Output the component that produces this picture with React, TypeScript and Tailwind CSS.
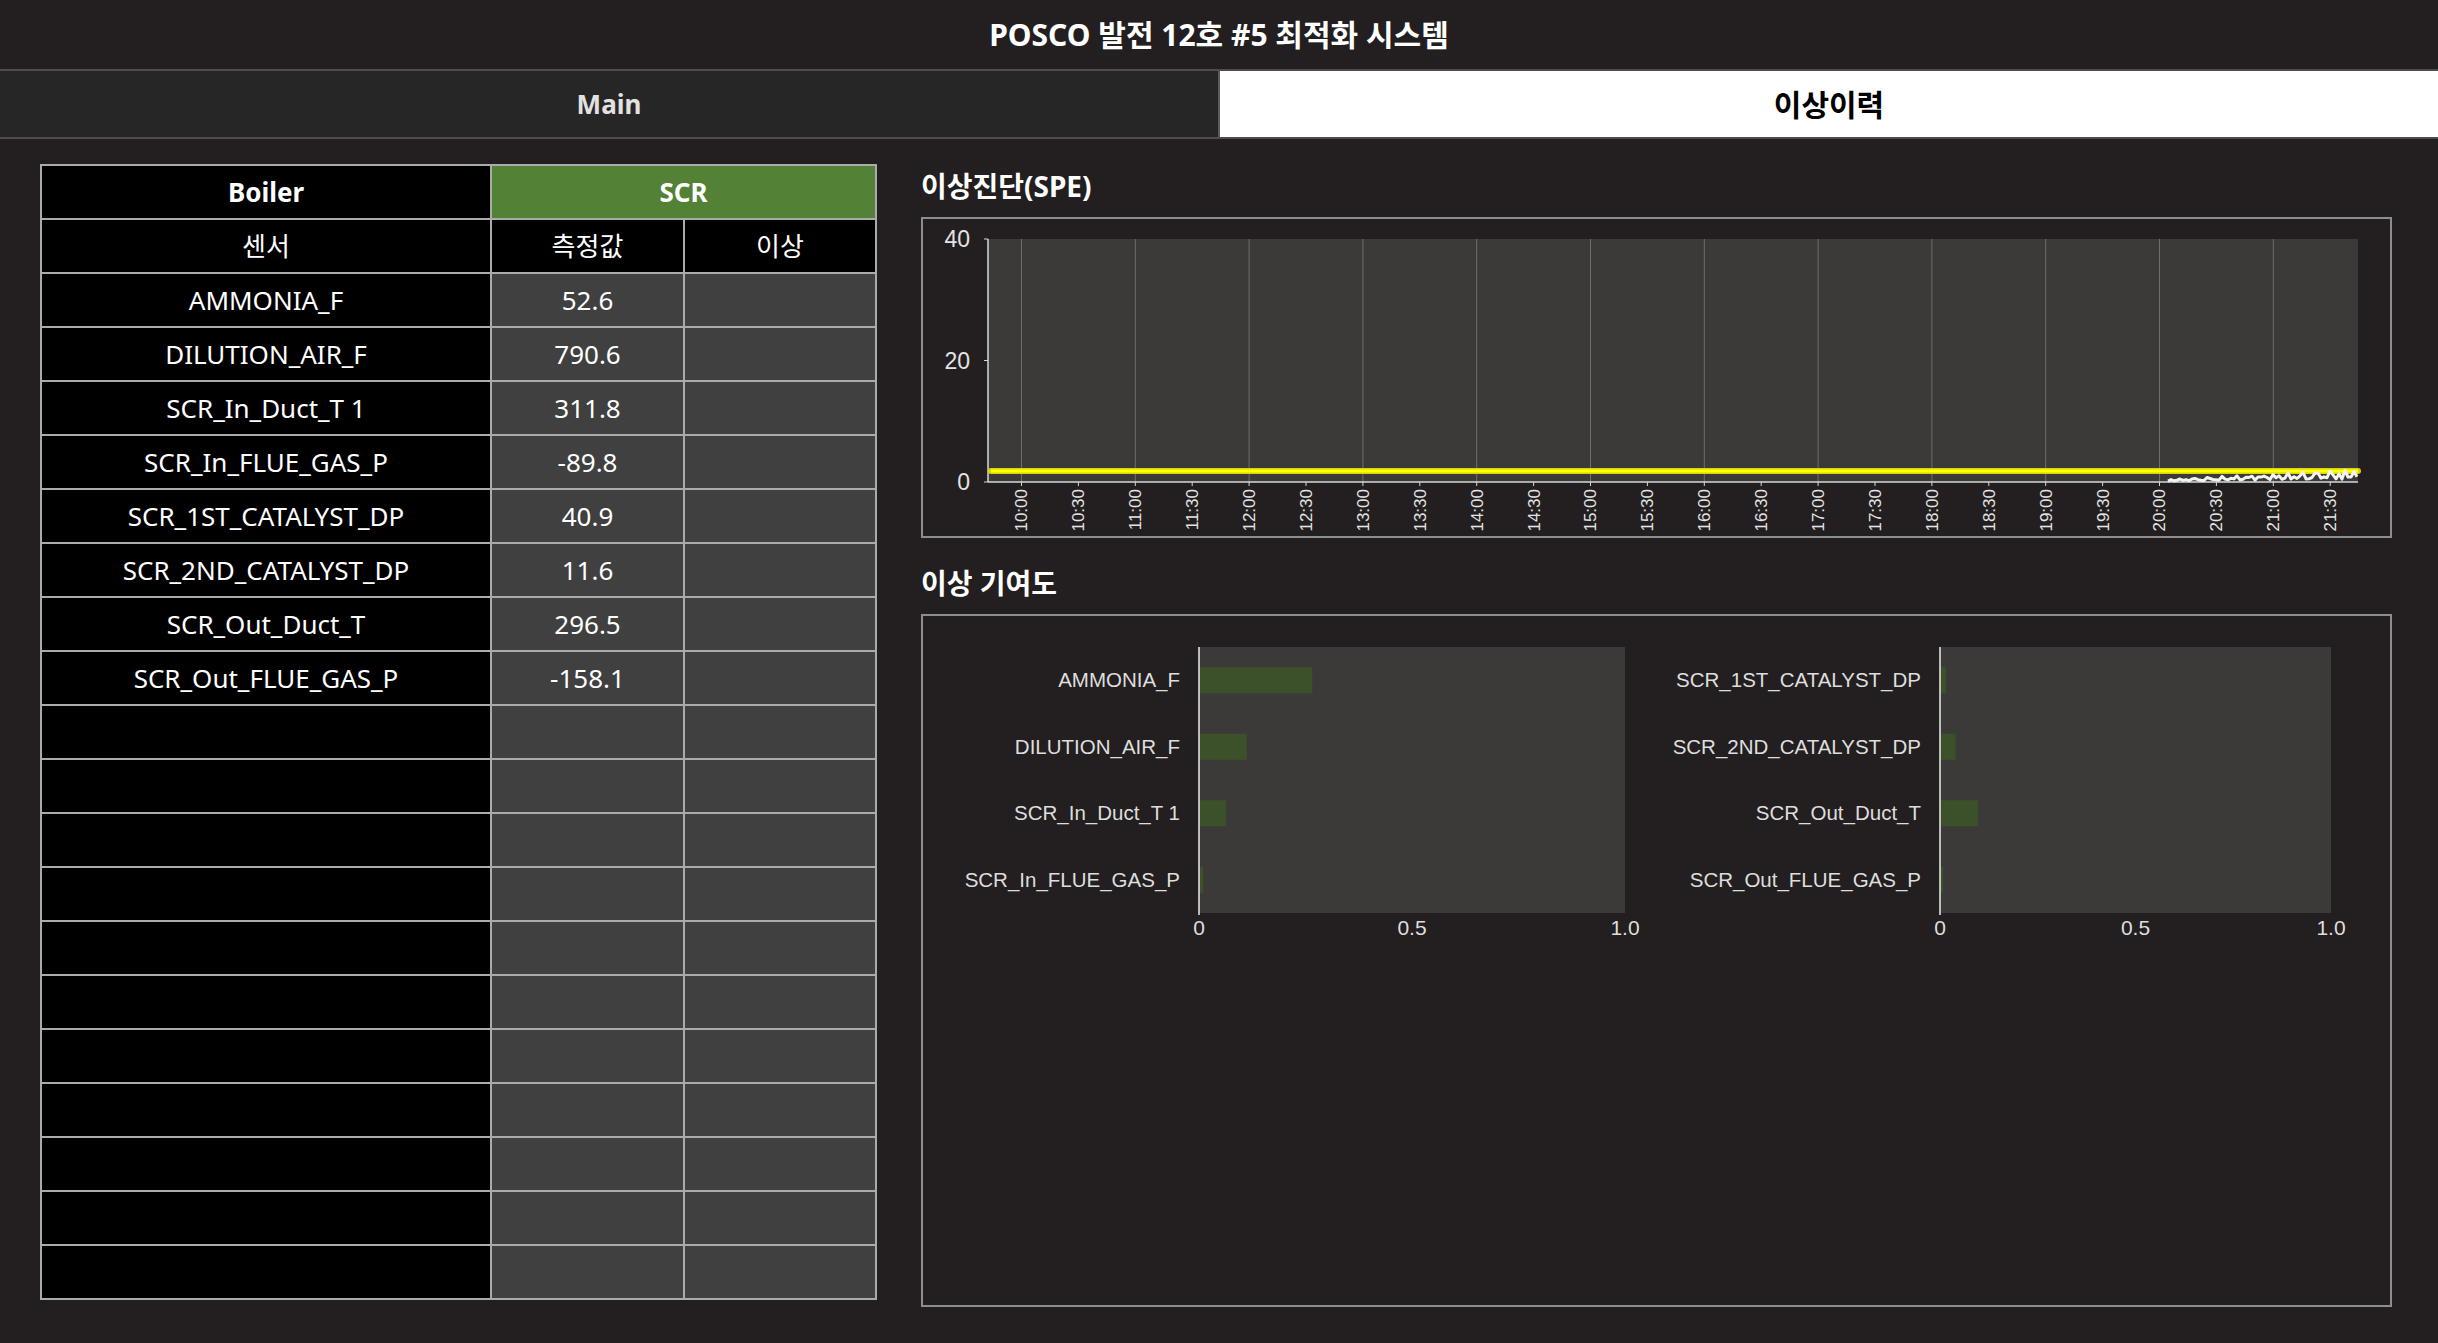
import React from 'react'

const sensors = [
  { name: 'AMMONIA_F', value: '52.6' },
  { name: 'DILUTION_AIR_F', value: '790.6' },
  { name: 'SCR_In_Duct_T 1', value: '311.8' },
  { name: 'SCR_In_FLUE_GAS_P', value: '-89.8' },
  { name: 'SCR_1ST_CATALYST_DP', value: '40.9' },
  { name: 'SCR_2ND_CATALYST_DP', value: '11.6' },
  { name: 'SCR_Out_Duct_T', value: '296.5' },
  { name: 'SCR_Out_FLUE_GAS_P', value: '-158.1' },
]

const EMPTY_ROWS = 11

const contribLeft = [
  { name: 'AMMONIA_F', v: 0.266 },
  { name: 'DILUTION_AIR_F', v: 0.112 },
  { name: 'SCR_In_Duct_T 1', v: 0.063 },
  { name: 'SCR_In_FLUE_GAS_P', v: 0.01 },
]

const contribRight = [
  { name: 'SCR_1ST_CATALYST_DP', v: 0.015 },
  { name: 'SCR_2ND_CATALYST_DP', v: 0.04 },
  { name: 'SCR_Out_Duct_T', v: 0.097 },
  { name: 'SCR_Out_FLUE_GAS_P', v: 0.008 },
]

const AXIS_FONT = 'Liberation Sans, Arial, sans-serif'

// grid with 2px gaps on a grey background gives the collapsed cell borders
function SensorTable() {
  const cell = 'flex items-center justify-center'
  return (
    <div className="grid h-fit w-[837px] grid-cols-[448px_191px_190px] auto-rows-[52px] gap-[2px] bg-[#ababab] p-[2px] text-[26px] text-white">
      <div className={`${cell} bg-black font-bold`}>Boiler</div>
      <div className={`${cell} col-span-2 bg-[#538135] font-bold`}>SCR</div>
      <div className={`${cell} bg-black`}>센서</div>
      <div className={`${cell} bg-black`}>측정값</div>
      <div className={`${cell} bg-black`}>이상</div>
      {sensors.map((s) => (
        <React.Fragment key={s.name}>
          <div className={`${cell} bg-black`}>{s.name}</div>
          <div className={`${cell} bg-[#404040]`}>{s.value}</div>
          <div className={`${cell} bg-[#404040]`} />
        </React.Fragment>
      ))}
      {Array.from({ length: EMPTY_ROWS }).map((_, i) => (
        <React.Fragment key={i}>
          <div className="bg-black" />
          <div className="bg-[#404040]" />
          <div className="bg-[#404040]" />
        </React.Fragment>
      ))}
    </div>
  )
}

function SpeChart() {
  const W = 1467
  const H = 317
  const px = 65
  const py = 20
  const pw = 1370
  const bottom = 263
  const perUnit = (bottom - py) / 40
  const hx = (h: number) => 98.5 + (h - 10) * 113.8
  const yv = (v: number) => bottom - v * perUnit

  const halfHours = Array.from({ length: 24 }, (_, i) => 10 + i * 0.5)
  const label = (h: number) => {
    const hh = Math.floor(h)
    return `${hh}:${h % 1 ? '30' : '00'}`
  }

  // residual trace only exists for the last couple of hours
  const noise = Array.from({ length: 64 }, (_, i) => {
    const t = i / 63
    const wig = Math.abs(Math.sin(i * 1.3) * Math.cos(i * 0.7)) * (0.3 + t * 1.4)
    return 0.15 + t * 0.35 + wig
  })
  const noisePts = noise.map((v, i) => `${1245 + i * 3},${yv(v).toFixed(1)}`).join(' ')

  return (
    <svg width={W} height={H} className="block">
      <rect x={px} y={py} width={pw} height={bottom - py} fill="#3b3a38" />
      {Array.from({ length: 12 }).map((_, i) => (
        <line key={i} x1={hx(10 + i)} x2={hx(10 + i)} y1={py} y2={bottom} stroke="#6e6e6e" strokeWidth={1} />
      ))}
      <line x1={px} x2={px} y1={py} y2={bottom} stroke="#d8d8d8" strokeWidth={1.5} />
      <line x1={px} x2={px + pw} y1={bottom} y2={bottom} stroke="#d8d8d8" strokeWidth={1.5} />
      {[40, 20, 0].map((v) => (
        <g key={v}>
          <line x1={px - 4} x2={px} y1={yv(v)} y2={yv(v)} stroke="#d8d8d8" />
          <text x={47} y={yv(v)} dy="0.35em" textAnchor="end" fontSize={23} fill="#e4e4e4" fontFamily={AXIS_FONT}>
            {v}
          </text>
        </g>
      ))}
      {halfHours.map((h) => (
        <g key={h}>
          <line x1={hx(h)} x2={hx(h)} y1={bottom} y2={bottom + 4} stroke="#d8d8d8" />
          <text
            x={hx(h)}
            y={270}
            dy="0.35em"
            textAnchor="end"
            transform={`rotate(-90 ${hx(h)} 270)`}
            fontSize={17}
            fill="#e4e4e4"
            fontFamily={AXIS_FONT}
          >
            {label(h)}
          </text>
        </g>
      ))}
      <line x1={68} x2={px + pw} y1={yv(1.8)} y2={yv(1.8)} stroke="#d6d600" strokeWidth={6} strokeLinecap="round" />
      <line x1={68} x2={px + pw} y1={yv(1.8)} y2={yv(1.8)} stroke="#ffff00" strokeWidth={3} />
      <polyline points={noisePts} fill="none" stroke="#f4f4f4" strokeWidth={3} strokeLinejoin="round" />
    </svg>
  )
}

function ContribChart({
  data,
  width,
  plotX,
  plotW,
}: {
  data: { name: string; v: number }[]
  width: number
  plotX: number
  plotW: number
}) {
  const plotY = 31
  const plotH = 266
  const band = plotH / data.length
  return (
    <svg width={width} height={340} className="block">
      <rect x={plotX} y={plotY} width={plotW} height={plotH} fill="#3b3a38" />
      {data.map((d, i) => {
        const cy = plotY + (i + 0.5) * band
        return (
          <g key={d.name}>
            <rect x={plotX} y={cy - 13} width={Math.max(d.v * plotW, 2)} height={26} fill="#3c5129" />
            <text x={plotX - 19} y={cy} dy="0.35em" textAnchor="end" fontSize={20.5} fill="#dedede" fontFamily={AXIS_FONT}>
              {d.name}
            </text>
          </g>
        )
      })}
      <line x1={plotX} x2={plotX} y1={plotY} y2={plotY + plotH + 2} stroke="#ededed" strokeWidth={1.5} />
      {[
        { t: '0', x: plotX },
        { t: '0.5', x: plotX + plotW / 2 },
        { t: '1.0', x: plotX + plotW },
      ].map((l) => (
        <text key={l.t} x={l.x} y={312} dy="0.35em" textAnchor="middle" fontSize={21} fill="#dedede" fontFamily={AXIS_FONT}>
          {l.t}
        </text>
      ))}
    </svg>
  )
}

export default function App() {
  return (
    <div className="flex h-[1343px] w-[2438px] flex-col overflow-hidden bg-[#231f20] font-['Noto_Sans','Noto_Sans_CJK_KR',sans-serif]">
      <header className="flex h-[69px] items-center justify-center text-[30px] font-bold text-white">
        POSCO 발전 12호 #5 최적화 시스템
      </header>

      <nav className="flex h-[70px] border-y-2 border-[#4d4d4d]">
        <div className="flex flex-1 items-center justify-center border-r-2 border-[#5a5a5a] bg-[#262626] text-[26px] font-bold text-[#e2e2e2]">
          Main
        </div>
        <div className="flex flex-1 items-center justify-center bg-white text-[30px] font-bold text-black">
          이상이력
        </div>
      </nav>

      <main className="flex items-start gap-[44px] pl-[40px] pt-[25px]">
        <SensorTable />

        <section className="flex w-[1471px] flex-col">
          <h2 className="mb-[9px] flex h-[44px] items-center text-[28px] font-bold text-white">이상진단(SPE)</h2>
          <div className="h-[321px] border-2 border-[#8e8e8e]">
            <SpeChart />
          </div>

          <h2 className="mt-[23px] mb-[9px] flex h-[44px] items-center text-[28px] font-bold text-white">이상 기여도</h2>
          <div className="flex h-[693px] border-2 border-[#8e8e8e]">
            <ContribChart data={contribLeft} width={734} plotX={276} plotW={426} />
            <ContribChart data={contribRight} width={733} plotX={283} plotW={391} />
          </div>
        </section>
      </main>
    </div>
  )
}
